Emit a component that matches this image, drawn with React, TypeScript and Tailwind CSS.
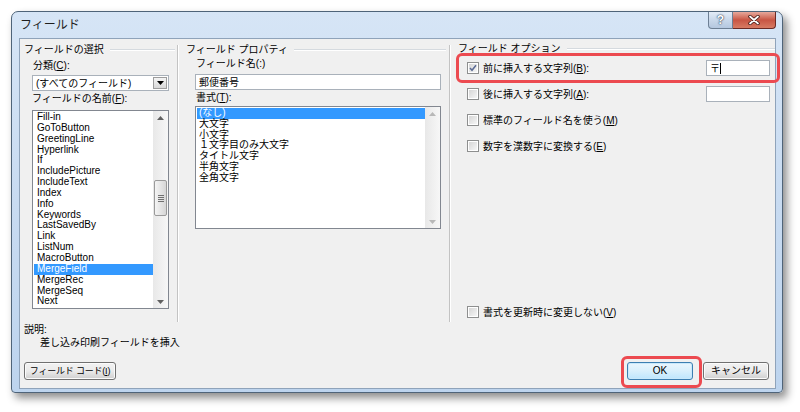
import React from 'react';

const FONT = '"Liberation Sans", "Noto Sans CJK JP", sans-serif';

const fieldNames = [
  'Fill-in',
  'GoToButton',
  'GreetingLine',
  'Hyperlink',
  'If',
  'IncludePicture',
  'IncludeText',
  'Index',
  'Info',
  'Keywords',
  'LastSavedBy',
  'Link',
  'ListNum',
  'MacroButton',
  'MergeField',
  'MergeRec',
  'MergeSeq',
  'Next',
];

const formats = ['(なし)', '大文字', '小文字', '１文字目のみ大文字', 'タイトル文字', '半角文字', '全角文字'];

const Arrow = ({ down, color }: { down?: boolean; color: string }) => (
  <svg width="7" height="4" viewBox="0 0 7 4">
    <path d={down ? 'M0 0 L7 0 L3.5 4 Z' : 'M0 4 L3.5 0 L7 4 Z'} fill={color} />
  </svg>
);

const ScrollBar = ({ thumbTop, thumbHeight, disabled }: { thumbTop?: number; thumbHeight?: number; disabled?: boolean }) => {
  const c = disabled ? '#b8b8b8' : '#606060';
  return (
    <div className="w-[15px] flex flex-col bg-gradient-to-r from-[#e8e8e8] to-[#f7f7f7]">
      <div className="h-[13px] flex items-center justify-center">
        <Arrow color={c} />
      </div>
      <div className="flex-1 flex flex-col">
        {thumbHeight ? (
          <>
            <div style={{ height: thumbTop }} />
            <div
              className="mx-[1px] rounded-[2px] border border-[#9a9a9a] bg-gradient-to-r from-[#f4f4f4] to-[#d6d6d6] flex flex-col items-center justify-center gap-[1px]"
              style={{ height: thumbHeight }}
            >
              <div className="w-[6px] h-px bg-[#707070]" />
              <div className="w-[6px] h-px bg-[#707070]" />
              <div className="w-[6px] h-px bg-[#707070]" />
              <div className="w-[6px] h-px bg-[#707070]" />
            </div>
          </>
        ) : null}
      </div>
      <div className="h-[13px] flex items-center justify-center">
        <Arrow down color={c} />
      </div>
    </div>
  );
};

const CheckBox = ({ checked }: { checked?: boolean }) => (
  <span className="w-[12px] h-[12px] shrink-0 border border-[#8e8f8f] bg-white p-px flex">
    <span className="flex-1 bg-gradient-to-br from-[#d6d6d6] to-[#f6f6f6] flex items-center justify-center">
      {checked && (
        <svg width="8" height="8" viewBox="0 0 8 8">
          <path d="M1 4 L3 6.3 L7 1.2" stroke="#5a6a94" strokeWidth="1.5" fill="none" />
        </svg>
      )}
    </span>
  </span>
);

const GroupHeader = ({ title, className }: { title: string; className: string }) => (
  <div className={`flex items-center h-[14px] leading-[14px] gap-[6px] ${className}`}>
    <span className="whitespace-nowrap">{title}</span>
    <div className="flex-1 h-[2px] border-t border-[#d5dadf] border-b border-b-white" />
  </div>
);

const Label = ({ children, className = '' }: { children: React.ReactNode; className?: string }) => (
  <div className={`h-[14px] leading-[14px] whitespace-nowrap ${className}`}>{children}</div>
);

const WinButton = ({ children, className = '', primary }: { children: React.ReactNode; className?: string; primary?: boolean }) => (
  <div
    className={`h-[18px] rounded-[3px] border flex items-center justify-center leading-none whitespace-nowrap ${
      primary
        ? 'border-[#3c7fb1] bg-gradient-to-b from-[#eaf6fd] via-[#d9f0fc] to-[#bee6fd] shadow-[inset_0_0_0_1px_#c9e9fb]'
        : 'border-[#707070] bg-gradient-to-b from-[#f2f2f2] via-[#ebebeb] to-[#cfcfcf] shadow-[inset_0_0_0_1px_#fbfbfb]'
    } ${className}`}
  >
    {children}
  </div>
);

const OptionRow = ({ checked, children, input }: { checked?: boolean; children: React.ReactNode; input?: React.ReactNode }) => (
  <div className="h-[26px] flex items-center pl-[16px] pr-[5px]">
    <CheckBox checked={checked} />
    <span className="ml-[4px] whitespace-nowrap">{children}</span>
    {input !== undefined && (
      <div className="ml-auto w-[64px] h-[16px] border border-[#a9b1ba] bg-white flex items-center pl-[3px]">{input}</div>
    )}
  </div>
);

export default function App() {
  return (
    <div className="w-[800px] h-[412px] bg-white pt-[11px] pl-[11px] text-[10px] text-black" style={{ fontFamily: FONT }}>
      <div className="relative w-[772px] h-[382px] rounded-t-[7px] rounded-b-[4px] border border-[#4f6479] bg-gradient-to-b from-[#d6e5f6] via-[#c8dbf1] to-[#bdd4ee] shadow-[4px_5px_9px_rgba(0,0,0,0.45)] flex flex-col pl-[7px] pr-[6px] pb-[3px]">
        {/* title bar */}
        <div className="h-[26px] flex">
          <span className="self-center ml-[1px] text-[12px] text-[#1e1e1e]">フィールド</span>
          <div className="ml-auto flex h-[17px]">
            <div className="w-[25px] rounded-bl-[4px] border border-[#6d7f94] border-t-0 bg-gradient-to-b from-[#e3ecf7] via-[#c9d8ea] to-[#b4c7df] flex items-center justify-center text-[12px] font-bold text-white [text-shadow:0_0_2px_#2a3a50,0_0_1px_#2a3a50]">
              ?
            </div>
            <div className="w-[43px] rounded-br-[4px] border border-[#6b2a25] border-t-0 border-l-0 bg-gradient-to-b from-[#e6a89c] via-[#c85544] to-[#d77a63] flex items-center justify-center">
              <svg width="12" height="10" viewBox="0 0 12 10">
                <path d="M2 1.5 L10 8.5 M10 1.5 L2 8.5" stroke="#3b1410" strokeWidth="3.4" strokeLinecap="round" />
                <path d="M2 1.5 L10 8.5 M10 1.5 L2 8.5" stroke="#ffffff" strokeWidth="1.8" strokeLinecap="round" />
              </svg>
            </div>
          </div>
        </div>

        {/* client area */}
        <div className="flex-1 bg-[#f0f0f0] border border-[#8fa3ba] flex flex-col">
          <div className="h-[283px] flex">
            {/* left column */}
            <div className="w-[157px] flex flex-col">
              <GroupHeader title="フィールドの選択" className="mt-[4px] pl-[4px] pr-[2px]" />
              <div className="ml-[12px] w-[137px] flex flex-col">
                <Label className="mt-[2px] pl-[1px]">
                  分類(<u>C</u>):
                </Label>
                <div className="mt-[2px] h-[16px] border border-[#a9b1ba] bg-white flex items-center">
                  <span className="pl-[3px]">(すべてのフィールド)</span>
                  <div className="ml-auto mr-px w-[14px] h-[12px] border border-[#9d9d9d] bg-gradient-to-b from-[#f5f5f5] to-[#d8d8d8] flex items-center justify-center">
                    <Arrow down color="#000" />
                  </div>
                </div>
                <Label className="mt-[1px]">
                  フィールドの名前(<u>F</u>):
                </Label>
                <div className="mt-[4px] h-[199px] border border-[#828790] bg-white flex">
                  <div className="flex-1 pt-px pl-px overflow-hidden">
                    {fieldNames.map((n) => (
                      <div
                        key={n}
                        className={`h-[10.85px] leading-[9.5px] pl-[3px] whitespace-nowrap ${
                          n === 'MergeField' ? 'bg-[#3399ff] text-white' : ''
                        }`}
                      >
                        {n}
                      </div>
                    ))}
                  </div>
                  <ScrollBar thumbTop={56} thumbHeight={36} />
                </div>
              </div>
            </div>

            <div className="w-[2px] mt-[6px] border-l border-[#c3c3c3] border-r border-r-white" />

            {/* middle column */}
            <div className="w-[270px] flex flex-col">
              <GroupHeader title="フィールド プロパティ" className="mt-[4px] pl-[7px] pr-[3px]" />
              <div className="ml-[16px] w-[246px] flex flex-col">
                <Label className="pl-[1px]">フィールド名(:)</Label>
                <div className="mt-[3px] h-[16px] border border-[#a9b1ba] bg-white flex items-center pl-[3px]">郵便番号</div>
                <Label className="mt-[1px] pl-[1px]">
                  書式(<u>T</u>):
                </Label>
                <div className="mt-px h-[123px] border border-[#828790] bg-white flex">
                  <div className="flex-1 pt-px pl-px overflow-hidden">
                    {formats.map((f) => (
                      <div
                        key={f}
                        className={`h-[10.8px] leading-[9.5px] pl-[2px] whitespace-nowrap ${
                          f === '(なし)' ? 'bg-[#3399ff] text-white' : ''
                        }`}
                      >
                        {f}
                      </div>
                    ))}
                  </div>
                  <ScrollBar disabled />
                </div>
              </div>
            </div>

            <div className="w-[2px] mt-[6px] border-l border-[#c3c3c3] border-r border-r-white" />

            {/* right column */}
            <div className="flex-1 flex flex-col">
              <GroupHeader title="フィールド オプション" className="mt-[3px] pl-[7px] pr-0" />
              <div className="-mt-px">
                <OptionRow
                  checked
                  input={
                    <span className="flex items-center">
                      〒<span className="w-px h-[11px] bg-black" />
                    </span>
                  }
                >
                  前に挿入する文字列(<u>B</u>):
                </OptionRow>
                <OptionRow input={null}>
                  後に挿入する文字列(<u>A</u>):
                </OptionRow>
                <OptionRow>
                  標準のフィールド名を使う(<u>M</u>)
                </OptionRow>
                <OptionRow>
                  数字を漢数字に変換する(<u>E</u>)
                </OptionRow>
              </div>
              <div className="mt-auto h-[20px]">
                <div className="h-[20px] flex items-center pl-[16px]">
                  <CheckBox />
                  <span className="ml-[4px]">
                    書式を更新時に変更しない(<u>V</u>)
                  </span>
                </div>
              </div>
            </div>
          </div>

          {/* bottom */}
          <div className="flex-1 flex flex-col pt-px">
            <div className="h-[13px] leading-[13px] pl-[4px]">説明:</div>
            <div className="h-[13px] leading-[13px] pl-[20px]">差し込み印刷フィールドを挿入</div>
            <div className="mt-[13px] flex pl-[4px] pr-[6px]">
              <WinButton className="w-[92px] text-[9px] tracking-[-0.2px]">
                フィールド コード(<u>I</u>)
              </WinButton>
              <WinButton primary className="ml-auto w-[66px]">
                OK
              </WinButton>
              <WinButton className="ml-[10px] w-[66px]">キャンセル</WinButton>
            </div>
          </div>
        </div>

        {/* red highlights */}
        <div className="absolute left-[444px] top-[41px] w-[324px] h-[30px] rounded-[6px] border-[3px] border-[#ec4a50]" />
        <div className="absolute left-[609px] top-[344px] w-[81px] h-[32px] rounded-[6px] border-[3px] border-[#ec4a50]" />
      </div>
    </div>
  );
}
